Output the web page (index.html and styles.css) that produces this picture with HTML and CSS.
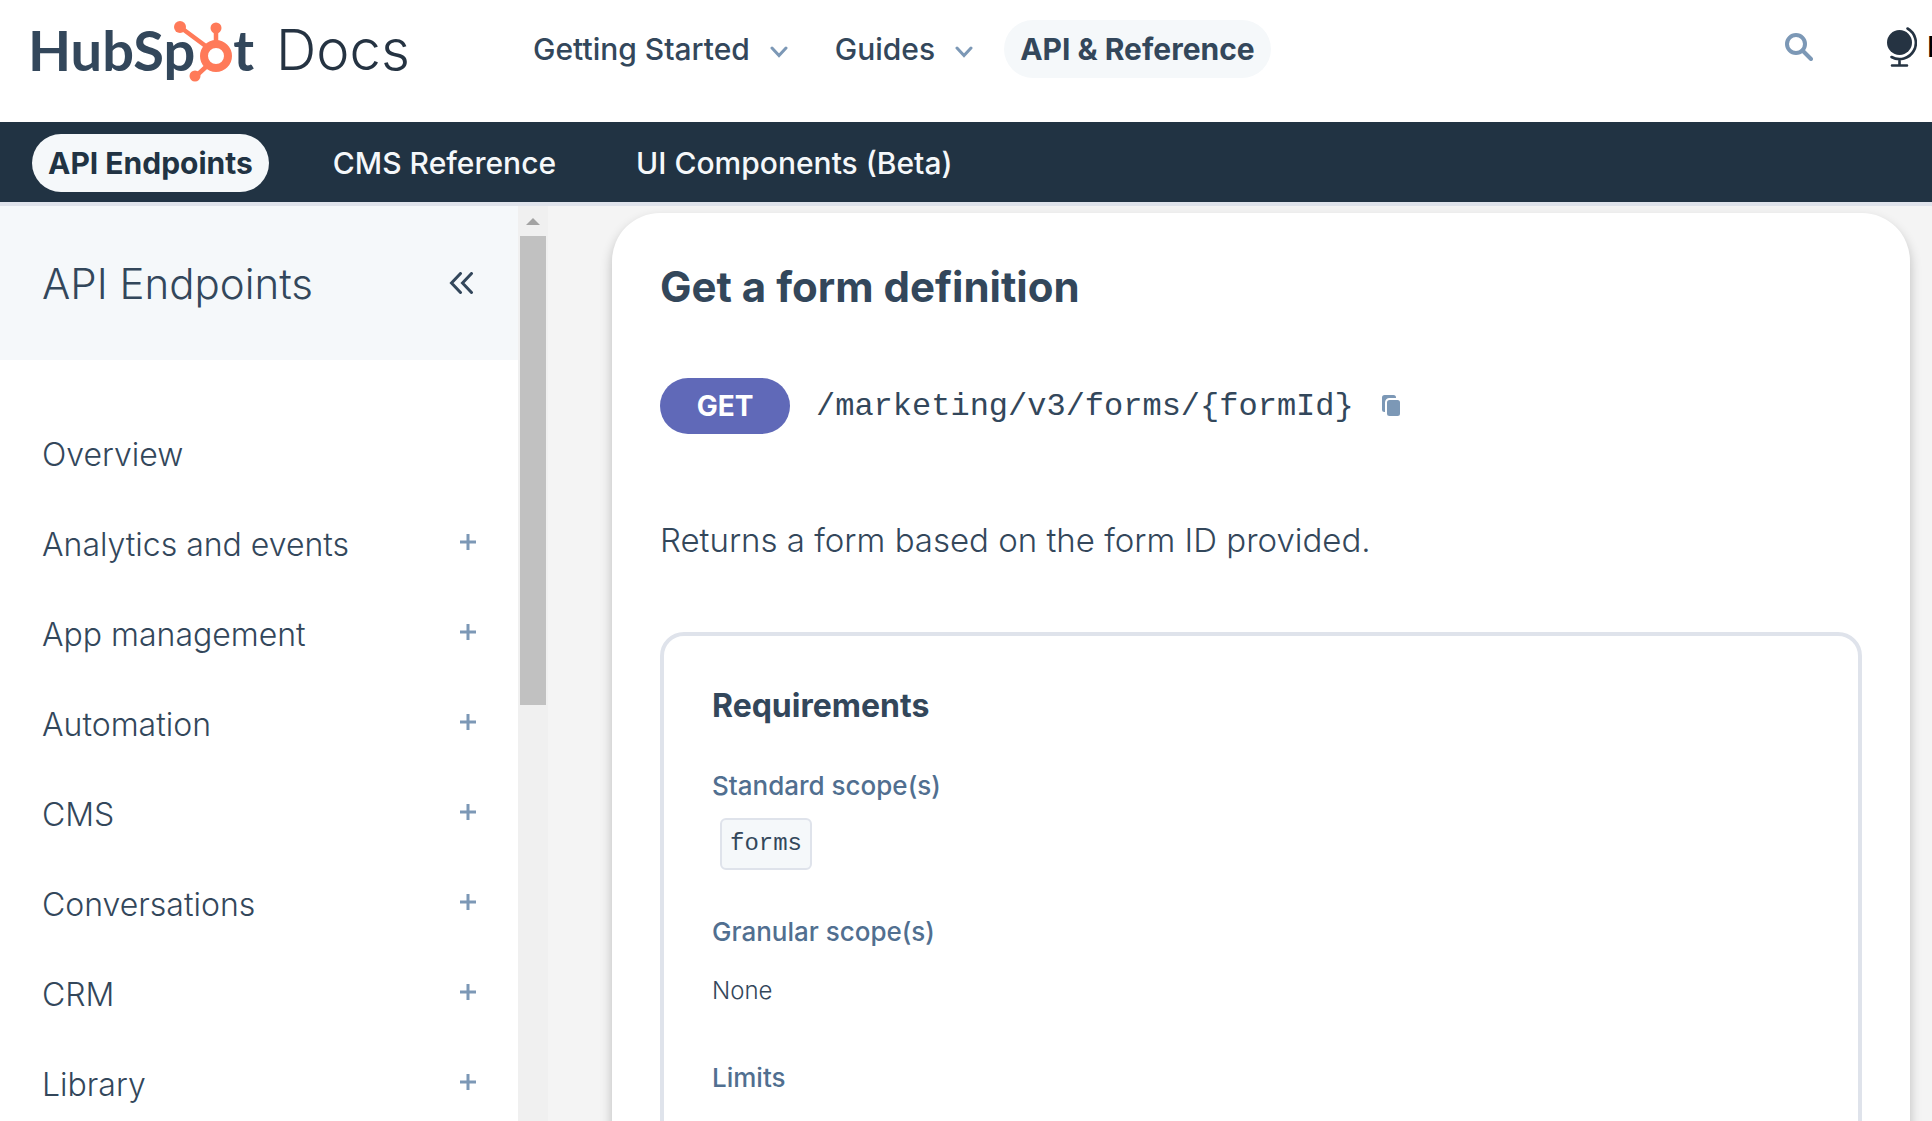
FILE: index.html
```html
<!DOCTYPE html>
<html lang="en">
<head>
<meta charset="utf-8">
<meta name="viewport" content="width=device-width, initial-scale=1">
<title>Get a form definition | HubSpot Docs</title>
<link rel="stylesheet" href="styles.css">
</head>
<body>
<header class="site-header">
  <a class="logo" href="#" aria-label="HubSpot Docs">
    <span class="logo-word">HubSp</span>
    <svg class="logo-sprocket" viewBox="0 2 38 64" aria-hidden="true">
      <g fill="none" stroke="#ff7a59">
        <circle cx="21" cy="40" r="12" stroke-width="8"/>
        <path d="M21 27V12M12 31L-15 11M13 49L0 61" stroke-width="4.5"/>
      </g>
      <g fill="#ff7a59">
        <circle cx="-15" cy="11" r="6"/>
        <circle cx="21" cy="12" r="5.5"/>
        <circle cx="0" cy="60" r="5.5"/>
      </g>
    </svg>
    <span class="logo-word">t</span>
    <span class="logo-docs">Docs</span>
  </a>
  <nav class="main-nav" aria-label="Main">
    <a class="nav-link" href="#">Getting Started
      <svg class="caret" viewBox="0 0 18 12" aria-hidden="true"><path d="M2 2l7 7.500L16 2"/></svg>
    </a>
    <a class="nav-link" href="#">Guides
      <svg class="caret" viewBox="0 0 18 12" aria-hidden="true"><path d="M2 2l7 7.500L16 2"/></svg>
    </a>
    <a class="nav-link is-active" href="#">API &amp; Reference</a>
  </nav>
  <div class="tools">
    <button class="icon-button" type="button" aria-label="Search">
      <svg class="search-icon" viewBox="0 0 28 28" aria-hidden="true"><circle cx="11" cy="11" r="9"/><path d="M17.500 17.500L26 26"/></svg>
    </button>
    <button class="language" type="button">
      <svg class="globe" viewBox="0 0 30 40" aria-hidden="true">
        <circle cx="12.500" cy="15.500" r="12.500" fill="#253342"/>
        <path d="M20.500 1.500A16 16 0 1 1 4.500 30M12.500 32.500V38M5 38.500H20" fill="none" stroke="#253342" stroke-width="2.600" stroke-linecap="round"/>
      </svg>
      English
    </button>
  </div>
</header>
<nav class="sub-nav" aria-label="API and reference">
  <a class="sub-link is-active" href="#">API Endpoints</a>
  <a class="sub-link" href="#">CMS Reference</a>
  <a class="sub-link" href="#">UI Components (Beta)</a>
</nav>
<div class="page">
  <aside class="sidebar">
    <div class="sidebar-head">
      <h2 class="sidebar-title">API Endpoints</h2>
      <button class="icon-button" type="button" aria-label="Collapse sidebar">
        <svg class="collapse" viewBox="0 0 25 22" aria-hidden="true"><path d="M11.500 1.500L2.500 11l9 9.500M22.500 1.500L13.500 11l9 9.500"/></svg>
      </button>
    </div>
    <ul class="tree">
      <li class="tree-item"><a href="#">Overview</a></li>
      <li class="tree-item"><a href="#">Analytics and events</a><button class="icon-button" type="button" aria-label="Expand Analytics and events"><svg class="plus" viewBox="0 0 16 16"><path d="M8 0v16M0 8h16"/></svg></button></li>
      <li class="tree-item"><a href="#">App management</a><button class="icon-button" type="button" aria-label="Expand App management"><svg class="plus" viewBox="0 0 16 16"><path d="M8 0v16M0 8h16"/></svg></button></li>
      <li class="tree-item"><a href="#">Automation</a><button class="icon-button" type="button" aria-label="Expand Automation"><svg class="plus" viewBox="0 0 16 16"><path d="M8 0v16M0 8h16"/></svg></button></li>
      <li class="tree-item"><a href="#">CMS</a><button class="icon-button" type="button" aria-label="Expand CMS"><svg class="plus" viewBox="0 0 16 16"><path d="M8 0v16M0 8h16"/></svg></button></li>
      <li class="tree-item"><a href="#">Conversations</a><button class="icon-button" type="button" aria-label="Expand Conversations"><svg class="plus" viewBox="0 0 16 16"><path d="M8 0v16M0 8h16"/></svg></button></li>
      <li class="tree-item"><a href="#">CRM</a><button class="icon-button" type="button" aria-label="Expand CRM"><svg class="plus" viewBox="0 0 16 16"><path d="M8 0v16M0 8h16"/></svg></button></li>
      <li class="tree-item"><a href="#">Library</a><button class="icon-button" type="button" aria-label="Expand Library"><svg class="plus" viewBox="0 0 16 16"><path d="M8 0v16M0 8h16"/></svg></button></li>
    </ul>
  </aside>
  <div class="scrollbar" aria-hidden="true">
    <svg class="scroll-up" viewBox="0 0 30 30"><path d="M15 12L22 19H8z" fill="#a3a3a3"/></svg>
    <div class="scroll-track"><div class="scroll-thumb"></div></div>
  </div>
  <main class="content">
    <article class="card">
      <h1 class="endpoint-title">Get a form definition</h1>
      <div class="endpoint">
        <span class="method">GET</span>
        <code class="path">/marketing/v3/forms/{formId}</code>
        <button class="icon-button" type="button" aria-label="Copy path">
          <svg class="copy" viewBox="0 0 18 22" aria-hidden="true"><rect x="0" y="0" width="14" height="17" rx="2.500"/><rect class="copy-front" x="4" y="4" width="15" height="18" rx="3.500"/></svg>
        </button>
      </div>
      <p class="summary">Returns a form based on the form ID provided.</p>
      <section class="requirements">
        <h2 class="requirements-title">Requirements</h2>
        <h3 class="label">Standard scope(s)</h3>
        <div class="value"><code class="scope">forms</code></div>
        <h3 class="label">Granular scope(s)</h3>
        <div class="value">None</div>
        <h3 class="label">Limits</h3>
      </section>
    </article>
  </main>
</div>
</body>
</html>
```
FILE: styles.css
```css
* { box-sizing: border-box; }

body {
  margin: 0;
  height: 100vh;
  display: flex;
  flex-direction: column;
  overflow: hidden;
  background: #fff;
  color: #33475b;
  font-family: Inter, "Liberation Sans", sans-serif;
  font-weight: 300;
}

h1, h2, h3, p, ul { margin: 0; padding: 0; }
a { color: inherit; text-decoration: none; white-space: nowrap; }
svg { display: block; flex: none; }

button {
  padding: 0;
  border: 0;
  background: none;
  font: inherit;
  color: inherit;
}

.icon-button { display: flex; flex: none; }

/* Header */
.site-header {
  flex: none;
  display: flex;
  align-items: flex-start;
  height: 122px;
  padding: 20px 0 0 28px;
  overflow: hidden;
}

.logo {
  display: flex;
  flex: none;
  width: 489px;
  height: 60px;
  align-items: center;
  font-size: 56px;
  line-height: 60px;
}

.logo-word { font-family: Lato, sans-serif; font-weight: 700; }
.logo-sprocket { width: 38px; height: 64px; overflow: visible; }

.logo-docs {
  margin-left: 22px;
  color: #253342;
}

.main-nav { display: flex; gap: 15px; }

.nav-link {
  display: flex;
  align-items: center;
  gap: 20px;
  height: 58px;
  padding: 0 16px;
  border-radius: 29px;
  font-size: 30px;
  font-weight: 500;
}

.nav-link.is-active { background: #f5f8fa; font-weight: 700; }

.caret {
  width: 18px;
  height: 12px;
  margin-top: 6px;
  fill: none;
  stroke: #7c98b6;
  stroke-width: 3;
  stroke-linecap: round;
}

.tools {
  display: flex;
  align-items: center;
  gap: 74px;
  height: 54px;
  margin-left: auto;
  margin-right: -92px;
}

.search-icon {
  width: 28px;
  height: 28px;
  fill: none;
  stroke: #7c98b6;
  stroke-width: 4;
  stroke-linecap: round;
}

.language {
  display: flex;
  align-items: center;
  gap: 10px;
  color: #000;
  font-size: 28px;
  font-weight: 500;
}

.globe { width: 30px; height: 40px; }

/* Secondary navigation */
.sub-nav {
  flex: none;
  display: flex;
  align-items: center;
  gap: 48px;
  height: 84px;
  padding: 2px 32px 0;
  background: #213343;
  border-bottom: 4px solid #dfe3eb;
  color: #f5f8fa;
}

.sub-link {
  height: 58px;
  padding: 0 16px;
  border-radius: 29px;
  font-size: 30px;
  font-weight: 500;
  line-height: 58px;
}

.sub-link.is-active { background: #f5f8fa; color: #213343; font-weight: 700; }

/* Body */
.page { flex: 1; display: flex; min-height: 0; }

.sidebar { flex: none; width: 518px; overflow: hidden; }

.sidebar-head {
  display: flex;
  align-items: center;
  justify-content: space-between;
  height: 154px;
  padding: 0 44px 0 42px;
  background: #f5f8fa;
}

.sidebar-title { font-size: 42px; font-weight: 300; }

.collapse {
  width: 25px;
  height: 22px;
  fill: none;
  stroke: #33475b;
  stroke-width: 3;
  stroke-linecap: round;
}

.tree { padding: 49px 42px; list-style: none; }

.tree-item {
  display: flex;
  align-items: center;
  justify-content: space-between;
  height: 90px;
  font-size: 32px;
}

.plus {
  width: 16px;
  height: 16px;
  margin-bottom: 4px;
  stroke: #7c98b6;
  stroke-width: 3;
}

.scrollbar {
  flex: none;
  display: flex;
  flex-direction: column;
  width: 30px;
  background: #f0f0f0;
}

.scroll-up { width: 30px; height: 30px; }
.scroll-track { flex: 1; padding: 0 2px; }
.scroll-thumb { height: 53%; background: #c1c1c1; }

.content {
  flex: 1;
  min-width: 0;
  padding: 7px 22px 0 64px;
  overflow: hidden;
  background: #f4f4f4;
}

.card {
  padding: 48px;
  border-radius: 48px;
  background: #fff;
  box-shadow: 0 6px 12px rgba(0, 0, 0, 0.24);
}

.endpoint-title {
  font-size: 42px;
  font-weight: 700;
  line-height: 52px;
}

.endpoint {
  display: flex;
  align-items: center;
  gap: 26px;
  margin-top: 65px;
}

.method {
  width: 130px;
  height: 56px;
  border-radius: 28px;
  background: #6069b8;
  color: #fff;
  font-size: 28px;
  font-weight: 700;
  line-height: 56px;
  text-align: center;
}

.path {
  font-family: "Liberation Mono", monospace;
  font-size: 32px;
  font-weight: 400;
}

.endpoint .icon-button { margin-left: 2px; }
.copy { width: 18px; height: 22px; fill: #7c98b6; overflow: visible; }
.copy-front { stroke: #fff; stroke-width: 2; }

.summary {
  margin-top: 82px;
  font-size: 33px;
  line-height: 48px;
}

.requirements {
  min-height: 640px;
  margin-top: 68px;
  padding: 48px;
  border: 4px solid #dfe3eb;
  border-radius: 24px;
}

.requirements-title {
  margin-bottom: 36px;
  font-size: 32px;
  font-weight: 700;
  line-height: 44px;
}

.label {
  color: #516f90;
  font-size: 26px;
  font-weight: 500;
  line-height: 44px;
}

.value {
  display: flex;
  align-items: center;
  height: 72px;
  margin-bottom: 30px;
  font-size: 24px;
}

.scope {
  height: 52px;
  margin-left: 8px;
  padding: 0 8px;
  border: 2px solid #dfe3eb;
  border-radius: 6px;
  background: #f5f8fa;
  font-family: "Liberation Mono", monospace;
  font-weight: 400;
  line-height: 48px;
}
```
